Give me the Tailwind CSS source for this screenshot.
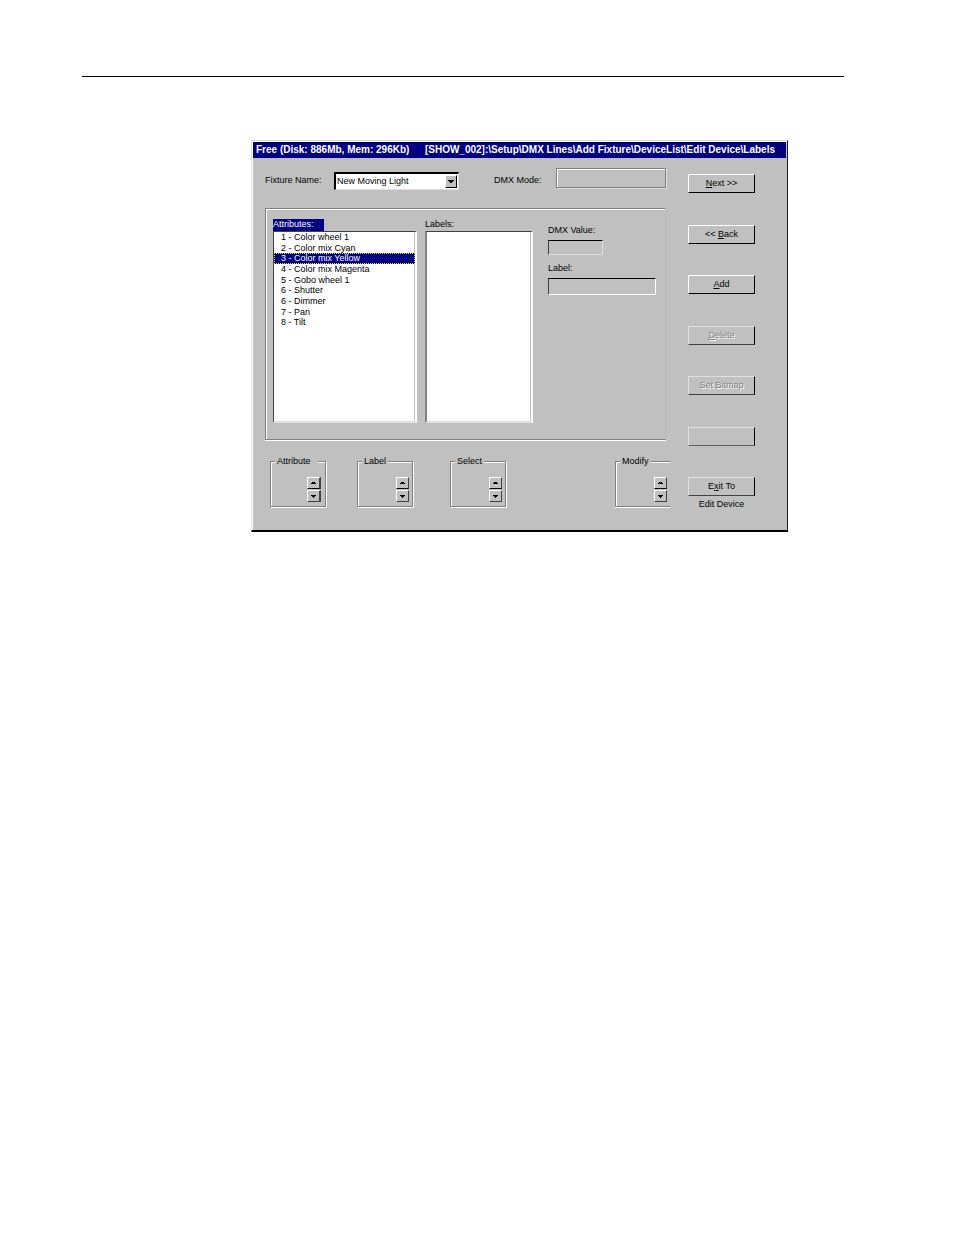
<!DOCTYPE html>
<html lang="en">
<head>
  <meta charset="UTF-8" />
  <title>Edit Device Labels</title>
  <meta name="viewport" content="width=device-width, initial-scale=1.0" />
  <script src="https://cdn.jsdelivr.net/npm/@tailwindcss/browser@4"></script>
</head>
<body class="bg-white min-h-screen pt-[76px] pl-[82px] pr-[110px] font-['Liberation_Sans',Arial,sans-serif] text-[9px] leading-[11px] text-black">

  <hr class="border-0 h-px bg-black" />

  <main class="mt-[63px] ml-[169px] mr-[56px] bg-[#c0c0c0] border-t border-l border-t-[#dfdfdf] border-l-[#dfdfdf] border-r border-r-[#202020] border-b-2 border-b-black shadow-[inset_1px_1px_0_#fff]">

    <!-- Title bar -->
    <h1 class="mt-px mx-px h-[16px] px-[3px] bg-[#000080] text-white text-[10px] leading-[16px] font-bold whitespace-nowrap flex justify-between">
      <span>Free (Disk: 886Mb, Mem: 296Kb)</span>
      <span class="pr-[8px]">[SHOW_002]:\Setup\DMX Lines\Add Fixture\DeviceList\Edit Device\Labels</span>
    </h1>

    <div class="flex pt-[10px] pl-[13px] pr-[32px] pb-[20px]">
      <div class="flex-1">

        <!-- Fixture and mode -->
        <div class="flex items-center h-[20px] pr-1">
          <label for="fixture" class="w-[69px] mt-[5px]">Fixture Name:</label>
          <div class="relative w-[125px] mt-[5px]">
            <select id="fixture" class="block appearance-none w-full h-[18px] pl-px leading-[14px] bg-white rounded-none border-t-2 border-l-2 border-black border-r border-b border-r-[#dfdfdf] border-b-[#dfdfdf]">
              <option>New Moving Light</option>
            </select>
            <span class="absolute right-[2px] top-[3px] w-[12px] h-[13px] bg-[#c0c0c0] border border-t-white border-l-white border-r-black border-b-black flex items-center justify-center pointer-events-none">
              <svg class="w-[6px] h-[3px]" viewBox="0 0 6 3" shape-rendering="crispEdges"><path d="M0 0h6v1H5v1H4v1H2V2H1V1H0z" fill="#000" /></svg>
            </span>
          </div>
          <label for="mode" class="ml-auto w-[62px] mt-[5px]">DMX Mode:</label>
          <input id="mode" class="w-[110px] h-[20px] px-1 border border-[#808080] shadow-[inset_1px_1px_0_#fff,1px_1px_0_#dfdfdf]" readonly />
        </div>

        <!-- Attributes and labels panel -->
        <section class="mt-[20px] mr-1 h-[232px] flex pt-[10px] pl-[7px] pr-[9px] border border-[#808080] border-r-[#b8b8c4] shadow-[inset_1px_1px_0_#fff,0_1px_0_#fff]">
          <div class="w-[144px]">
            <h2 id="attributes" class="w-[51px] h-[12px] bg-[#000080] text-white">Attributes:</h2>
            <ul role="listbox" aria-labelledby="attributes" class="h-[192px] bg-white border-2 border-t-[#404040] border-l-[#404040] border-t border-l border-r-white border-b-[#dfdfdf] shadow-[inset_-1px_0_0_#c0c0c0]">
              <li class="h-[96px] flex flex-col whitespace-nowrap" role="presentation">
                <div role="option" class="flex-1 min-h-0 pl-[7px]">1 - Color wheel 1</div>
                <div role="option" class="flex-1 min-h-0 pl-[7px]">2 - Color mix Cyan</div>
                <div role="option" aria-selected="true" class="flex-1 min-h-0 pl-[7px] bg-[#000080] text-white outline-1 outline-dotted -outline-offset-1 outline-[#e0e040]">3 - Color mix Yellow</div>
                <div role="option" class="flex-1 min-h-0 pl-[7px]">4 - Color mix Magenta</div>
                <div role="option" class="flex-1 min-h-0 pl-[7px]">5 - Gobo wheel 1</div>
                <div role="option" class="flex-1 min-h-0 pl-[7px]">6 - Shutter</div>
                <div role="option" class="flex-1 min-h-0 pl-[7px]">6 - Dimmer</div>
                <div role="option" class="flex-1 min-h-0 pl-[7px]">7 - Pan</div>
                <div role="option" class="flex-1 min-h-0 pl-[7px]">8 - Tilt</div>
              </li>
            </ul>
          </div>
          <div class="w-[108px] ml-[8px]">
            <h2 id="labels" class="h-[12px]">Labels:</h2>
            <ul role="listbox" aria-labelledby="labels" class="h-[192px] bg-white border-2 border-t border-t-[#404040] border-l-[#808080] border-r-white border-b-[#dfdfdf] shadow-[inset_-1px_0_0_#c0c0c0]"></ul>
          </div>
          <div class="flex-1 ml-[15px] pt-[6px]">
            <label for="value" class="block">DMX Value:</label>
            <input id="value" class="block mt-[4px] w-[55px] h-[15px] px-1 border border-t-black border-l-[#404040] border-r-[#dfdfdf] border-b-[#dfdfdf]" />
            <label for="label" class="block mt-[8px]">Label:</label>
            <input id="label" class="block mt-[4px] w-full h-[17px] px-1 border border-t-black border-l-[#404040] border-r-white border-b-white" />
          </div>
        </section>

        <!-- Wheel groups -->
        <div class="flex mt-[16px] pl-[5px]">
          <fieldset class="w-[56px] h-[51px] border border-[#808080] shadow-[inset_1px_1px_0_#fff,1px_1px_0_#fff] pl-[4px] pr-[4px]">
            <legend class="px-[2px] pr-[7px] bg-[#c0c0c0]">Attribute</legend>
            <div class="flex flex-col items-end gap-px pt-[10px]">
              <button aria-label="Attribute up" class="w-[14px] h-[12px] border border-t-white border-l-white border-r-2 border-r-[#404040] border-b-black flex items-center justify-center">
                <svg class="w-[5px] h-[2px]" viewBox="0 0 5 2" shape-rendering="crispEdges"><path d="M1 0h3v1h1v1H0V1h1z" /></svg>
              </button>
              <button aria-label="Attribute down" class="w-[14px] h-[12px] border border-t-white border-l-white border-r-2 border-r-[#404040] border-b-[#404040] flex items-center justify-center">
                <svg class="w-[5px] h-[3px]" viewBox="0 0 5 3" shape-rendering="crispEdges"><path d="M0 0h5v1H4v1H3v1H2V2H1V1H0z" /></svg>
              </button>
            </div>
          </fieldset>
          <fieldset class="w-[56px] h-[51px] ml-[31px] border border-[#808080] shadow-[inset_1px_1px_0_#fff,1px_1px_0_#fff] pl-[4px] pr-[3px]">
            <legend class="px-[2px] bg-[#c0c0c0]">Label</legend>
            <div class="flex flex-col items-end gap-px pt-[10px]">
              <button aria-label="Label up" class="w-[13px] h-[12px] border border-t-white border-l-white border-r-[#404040] border-b-black flex items-center justify-center">
                <svg class="w-[5px] h-[2px]" viewBox="0 0 5 2" shape-rendering="crispEdges"><path d="M1 0h3v1h1v1H0V1h1z" /></svg>
              </button>
              <button aria-label="Label down" class="w-[13px] h-[12px] border border-t-white border-l-white border-r-[#404040] border-b-[#404040] flex items-center justify-center">
                <svg class="w-[5px] h-[3px]" viewBox="0 0 5 3" shape-rendering="crispEdges"><path d="M0 0h5v1H4v1H3v1H2V2H1V1H0z" /></svg>
              </button>
            </div>
          </fieldset>
          <fieldset class="w-[56px] h-[51px] ml-[37px] border border-[#808080] shadow-[inset_1px_1px_0_#fff,1px_1px_0_#fff] pl-[4px] pr-[3px]">
            <legend class="px-[2px] bg-[#c0c0c0]">Select</legend>
            <div class="flex flex-col items-end gap-px pt-[10px]">
              <button aria-label="Select up" class="w-[13px] h-[12px] border border-t-white border-l-white border-r-[#404040] border-b-black flex items-center justify-center">
                <svg class="w-[5px] h-[2px]" viewBox="0 0 5 2" shape-rendering="crispEdges"><path d="M1 0h3v1h1v1H0V1h1z" /></svg>
              </button>
              <button aria-label="Select down" class="w-[13px] h-[12px] border border-t-white border-l-white border-r-[#404040] border-b-[#404040] flex items-center justify-center">
                <svg class="w-[5px] h-[3px]" viewBox="0 0 5 3" shape-rendering="crispEdges"><path d="M0 0h5v1H4v1H3v1H2V2H1V1H0z" /></svg>
              </button>
            </div>
          </fieldset>
          <fieldset class="w-[55px] h-[51px] ml-auto border border-r-0 border-[#808080] shadow-[inset_1px_1px_0_#fff,0_1px_0_#fff] pl-[4px] pr-[3px]">
            <legend class="px-[2px] bg-[#c0c0c0]">Modify</legend>
            <div class="flex flex-col items-end gap-px pt-[10px]">
              <button aria-label="Modify up" class="w-[13px] h-[12px] border border-t-white border-l-white border-r-[#404040] border-b-black flex items-center justify-center">
                <svg class="w-[5px] h-[2px]" viewBox="0 0 5 2" shape-rendering="crispEdges"><path d="M1 0h3v1h1v1H0V1h1z" /></svg>
              </button>
              <button aria-label="Modify down" class="w-[13px] h-[12px] border border-t-white border-l-white border-r-[#404040] border-b-[#404040] flex items-center justify-center">
                <svg class="w-[5px] h-[3px]" viewBox="0 0 5 3" shape-rendering="crispEdges"><path d="M0 0h5v1H4v1H3v1H2V2H1V1H0z" /></svg>
              </button>
            </div>
          </fieldset>
        </div>
      </div>

      <!-- Soft keys -->
      <div class="w-[67px] ml-[18px] pt-[6px]">
        <div class="h-[322px] flex flex-col justify-between">
          <button class="h-[19px] border border-t-white border-l-white border-r-black border-b-black"><u>N</u>ext &gt;&gt;</button>
          <button class="h-[19px] border border-t-white border-l-white border-r-black border-b-black">&lt;&lt; <u>B</u>ack</button>
          <button class="h-[19px] border border-t-white border-l-white border-r-black border-b-black"><u>A</u>dd</button>
          <button disabled class="h-[19px] border border-t-[#dfdfdf] border-l-[#dfdfdf] border-r-black border-b-[#404040] text-[#808080] text-shadow-[1px_1px_0_#fff]"><u>D</u>elete</button>
          <button disabled class="h-[19px] border border-t-[#dfdfdf] border-l-[#dfdfdf] border-r-black border-b-[#404040] text-[#808080] text-shadow-[1px_1px_0_#fff]">Set Bitmap</button>
          <button disabled aria-label="Unused" class="h-[19px] border border-t-[#dfdfdf] border-l-[#dfdfdf] border-r-black border-b-[#606060]"></button>
          <button class="h-[19px] border border-t-[#dfdfdf] border-l-[#dfdfdf] border-r-black border-b-[#404040]">E<u>x</u>it To</button>
        </div>
        <p class="mt-[3px] text-center">Edit Device</p>
      </div>
    </div>
  </main>

</body>
</html>
